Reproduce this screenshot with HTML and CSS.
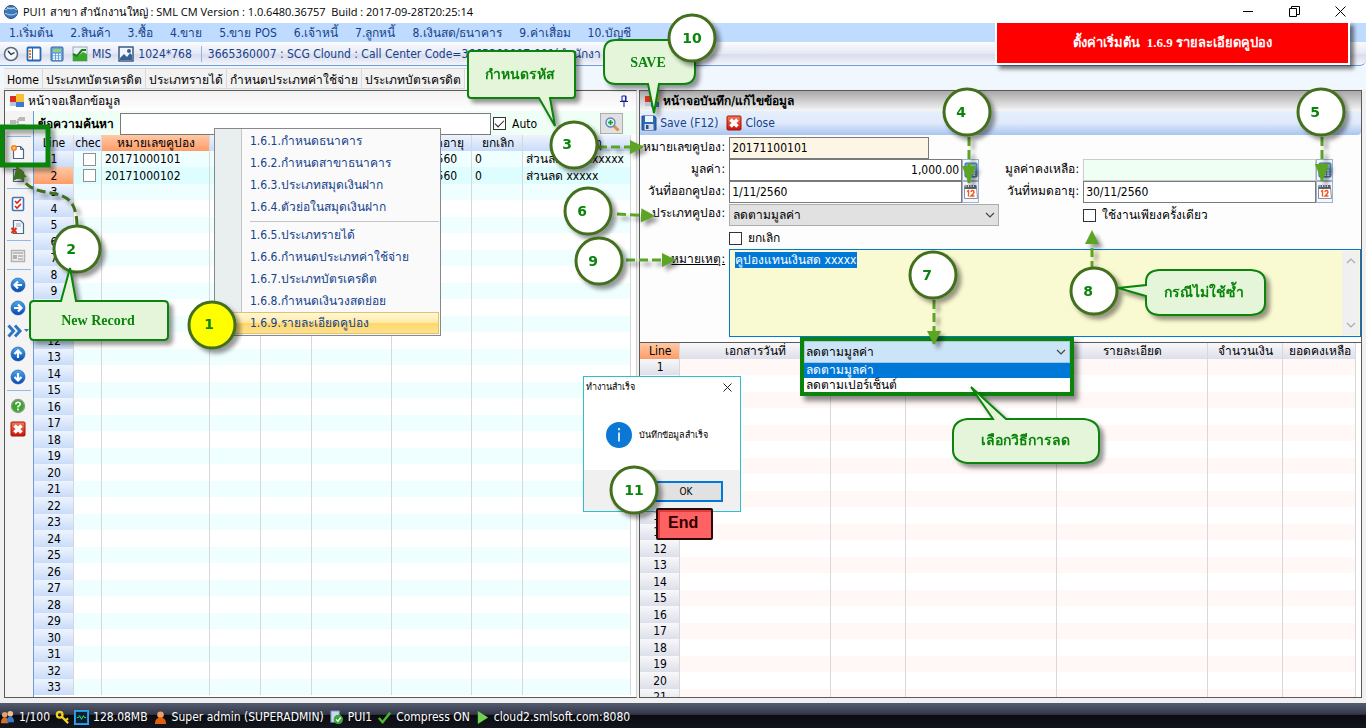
FILE: index.html
```html
<!DOCTYPE html>
<html lang="th">
<head>
    <meta charset="UTF-8">
    <meta name="viewport" content="width=device-width, initial-scale=1.0">
    <title>SML CM</title>
    <link rel="stylesheet" href="styles.css">
</head>
<body>
    <!-- shared icons -->
    <svg class="defs" width="0" height="0">
        <defs>
            <linearGradient id="blueBall" x1="0" y1="0" x2="0" y2="1">
                <stop offset="0" stop-color="#4aa8f0"/><stop offset="1" stop-color="#0648b0"/>
            </linearGradient>
            <linearGradient id="redBox" x1="0" y1="0" x2="0" y2="1">
                <stop offset="0" stop-color="#f47a5c"/><stop offset="1" stop-color="#c81408"/>
            </linearGradient>
            <symbol id="i-form" viewBox="0 0 16 16">
                <rect x="1" y="3" width="7" height="6" fill="#d8301c"/>
                <rect x="7" y="1" width="8" height="8" fill="#f8c030"/>
                <rect x="7" y="9" width="8" height="5" fill="#3e78d0"/>
                <rect x="1" y="9" width="6" height="4" fill="#b8c4d8"/>
            </symbol>
            <symbol id="i-close" viewBox="0 0 16 16">
                <rect x="1" y="1" width="14" height="14" rx="1" fill="url(#redBox)" stroke="#a81408"/>
                <path d="M4.5 4.5l7 7M11.5 4.5l-7 7" stroke="#fff" stroke-width="3.600"/>
            </symbol>
            <symbol id="i-calc" viewBox="0 0 16 16">
                <rect x="2" y="1" width="12" height="14" rx="1" fill="#6aa2dc" stroke="#3468a8"/>
                <rect x="4" y="3" width="8" height="3" fill="#8fd070"/>
                <path d="M4 8.5h8M4 11h8M4 13.3h8" stroke="#fff" stroke-width="1.4" stroke-dasharray="2 1"/>
            </symbol>
            <symbol id="i-cal" viewBox="0 0 16 16">
                <path d="M1.500 3h12l1 11.500h-13z" fill="#fff" stroke="#8a90a0"/>
                <path d="M1.500 1h12v4h-12z" fill="#5c6474"/>
                <path d="M3 0v3M5.500 0v3M8 0v3M10.500 0v3" stroke="#d8dce4"/>
                <path d="M4 7.500l1.500-1v6M8 8q0-1.500 1.500-1.500t1.500 1.500q0 1.300-3 4h3.500" fill="none" stroke="#f05a20" stroke-width="1.400"/>
            </symbol>
            <symbol id="i-save" viewBox="0 0 16 16">
                <path d="M1 1h12.500L15 3v12H1z" fill="#2c68b4" stroke="#1c4c90"/>
                <rect x="4" y="1" width="8" height="6" fill="#eef4fc"/>
                <rect x="3.500" y="9" width="9" height="6" fill="#d4dce8"/>
                <rect x="5" y="10" width="2.500" height="4" fill="#24508c"/>
            </symbol>
            <symbol id="i-ball" viewBox="0 0 16 16">
                <circle cx="8" cy="8" r="7" fill="url(#blueBall)" stroke="#1450a0" stroke-width=".6"/>
            </symbol>
            <symbol id="i-arrow" viewBox="0 0 16 16">
                <path d="M12 8H5M8 4.500L4.500 8L8 11.500" fill="none" stroke="#fff" stroke-width="2.200"/>
            </symbol>
            <symbol id="i-check" viewBox="0 0 16 16">
                <path d="M2 8.500l4 4.500l8-10" fill="none" stroke="#4cb830" stroke-width="2.600"/>
            </symbol>
            <symbol id="i-down" viewBox="0 0 10 6">
                <path d="M1 1l4 4l4-4" fill="none" stroke="currentColor" stroke-width="1.200"/>
            </symbol>
        </defs>
    </svg>

    <header class="titlebar">
        <svg class="icon" viewBox="0 0 16 16"><circle cx="8" cy="8" r="6.500" fill="#3c78b8" stroke="#284c7c"/><path d="M2 6q6-4 12 0M2 9q6 4 12 0M4 3.500q4 3 8 0" fill="none" stroke="#b4d4f0"/></svg>
        <span class="caption">PUI1 สาขา สำนักงานใหญ่ : SML CM Version : 1.0.6480.36757&nbsp; Build : 2017-09-28T20:25:14</span>
        <div class="window-buttons">
            <button aria-label="Minimize"><svg width="11" height="11" viewBox="0 0 11 11"><path d="M0 5.500h10" stroke="#000"/></svg></button>
            <button aria-label="Restore"><svg width="11" height="11" viewBox="0 0 11 11"><path d="M.5 2.500h7v8h-7zM2.500 2.500v-2h8v8h-3" fill="none" stroke="#000"/></svg></button>
            <button aria-label="Close"><svg width="11" height="11" viewBox="0 0 11 11"><path d="M.5.5l10 10M10.500.5l-10 10" stroke="#000"/></svg></button>
        </div>
    </header>

    <nav class="menubar">
        <a href="#">1.เริ่มต้น</a>
        <a href="#">2.สินค้า</a>
        <a href="#">3.ซื้อ</a>
        <a href="#">4.ขาย</a>
        <a href="#">5.ขาย POS</a>
        <a href="#">6.เจ้าหนี้</a>
        <a href="#">7.ลูกหนี้</a>
        <a href="#">8.เงินสด/ธนาคาร</a>
        <a href="#">9.ค่าเสื่อม</a>
        <a href="#">10.บัญชี</a>
    </nav>

    <div class="toolbar">
        <button aria-label="Clock"><svg class="icon" viewBox="0 0 16 16"><circle cx="8" cy="8" r="6.500" fill="#f4f8fc" stroke="#5c6c80" stroke-width="1.600"/><path d="M5 5l3 3.500l3.500-2" fill="none" stroke="#222" stroke-width="1.200"/></svg></button>
        <button aria-label="Layout"><svg class="icon" viewBox="0 0 16 16"><rect x="1.500" y="1.500" width="13" height="13" rx="1" fill="#fff" stroke="#2468b8" stroke-width="1.800"/><path d="M6.500 2v12" stroke="#2468b8"/><path d="M3 5h2M3 8h2M3 11h2" stroke="#f08020" stroke-width="2"/></svg></button>
        <button aria-label="Calculator"><svg class="icon"><use href="#i-calc"/></svg></button>
        <button><svg class="icon" viewBox="0 0 16 16"><rect x="1" y="1" width="14" height="14" fill="#e8f0f8" stroke="#9aa8c0"/><path d="M1 15V8l4 3l6-5l4 2v7z" fill="#38a828"/><path d="M1 8l4 2l5-6h4" fill="none" stroke="#1c7c1c" stroke-width="2"/></svg>MIS</button>
        <button><svg class="icon" viewBox="0 0 16 16"><rect x="1" y="1" width="14" height="14" fill="#f0f6fc" stroke="#305080" stroke-width="1.400"/><path d="M2 12l4-4l3 3l3-4l2 2v5H2z" fill="#3c6090"/><circle cx="11" cy="5" r="2" fill="#3c6090"/></svg>1024*768</button>
        <span class="company">3665360007 : SCG Clound : Call Center Code=3665360007-001(สำนักงา</span>
    </div>

    <nav class="tabs">
        <a href="#">Home</a>
        <a href="#">ประเภทบัตรเครดิต</a>
        <a href="#">ประเภทรายได้</a>
        <a href="#">กำหนดประเภทค่าใช้จ่าย</a>
        <a href="#">ประเภทบัตรเครดิต</a>
        <a href="#" class="active">รายละเอียดคูปอง</a>
    </nav>

    <main>
        <section class="pane list-pane">
            <h2 class="pane-title"><svg class="icon"><use href="#i-form"/></svg>หน้าจอเลือกข้อมูล
                <svg class="pin" viewBox="0 0 8 12"><path d="M2 1h4v5H2zM0 6.500h8M4 7v5M5.500 1v5" fill="none" stroke="#101c98"/></svg></h2>
            <div class="list-body">
                <div class="tools">
                    <button aria-label="Tree"><svg class="icon" viewBox="0 0 16 16"><path d="M0 5h6v4H0zM9 2h6v4H9zM9 9h6v4H9z" fill="#b8b8b8"/><path d="M6 7h2V4h1M8 7v4h1" fill="none" stroke="#999"/></svg></button>
                    <hr>
                    <button aria-label="New"><svg class="icon" viewBox="0 0 16 16"><path d="M3.500 2.500h7l3 3v9h-10z" fill="#fff" stroke="#486890" stroke-width="1.200"/><path d="M10.500 2.500v3h3" fill="none" stroke="#486890"/><circle cx="4" cy="4" r="3" fill="#f88020"/><circle cx="4" cy="4" r="1.500" fill="#ffd060"/></svg></button>
                    <button aria-label="Edit"><svg class="icon" viewBox="0 0 16 16"><path d="M3.500 2.500h7l3 3v9h-10z" fill="#dce8f4" stroke="#486890" stroke-width="1.200"/></svg></button>
                    <hr>
                    <button aria-label="Select"><svg class="icon" viewBox="0 0 16 16"><rect x="2.500" y="1.500" width="11" height="13" rx="1" fill="#fff" stroke="#3c78c0" stroke-width="1.600"/><path d="M5 5l2 2l4-4M5 10l2 2l4-4" fill="none" stroke="#d82010" stroke-width="1.600"/></svg></button>
                    <button aria-label="Delete"><svg class="icon" viewBox="0 0 16 16"><path d="M3.500 1.500h7l3 3v10h-10z" fill="#f4f8fc" stroke="#486890" stroke-width="1.200"/><path d="M6 5h5M6 7h5" stroke="#98a8c0"/><path d="M1.500 9l5 5M6.500 9l-5 5" stroke="#e03010" stroke-width="2.200"/></svg></button>
                    <hr>
                    <button aria-label="Preview"><svg class="icon" viewBox="0 0 16 16"><rect x="1.500" y="2.500" width="13" height="11" fill="#eee" stroke="#b0b0b0" stroke-width="1.400"/><path d="M3 5h10M8 8h5M8 11h5" stroke="#b0b0b0" stroke-width="1.400"/><path d="M3 7h4v4H3z" fill="#b0b0b0"/></svg></button>
                    <hr>
                    <button aria-label="First"><svg class="icon"><use href="#i-ball"/><use href="#i-arrow"/></svg></button>
                    <button aria-label="Next"><svg class="icon" viewBox="0 0 16 16"><use href="#i-ball"/><use href="#i-arrow" transform="rotate(180 8 8)"/></svg></button>
                    <button aria-label="Skip" class="split"><svg class="icon" viewBox="0 0 16 16"><path d="M1.500 2.500l5 5.500l-5 5.500M8 2.500l5 5.500l-5 5.500" fill="none" stroke="#2c74c0" stroke-width="3"/></svg><svg class="caret" viewBox="0 0 5 3"><path d="M0 0h5L2.500 3z" fill="#5070a8"/></svg></button>
                    <button aria-label="Up"><svg class="icon" viewBox="0 0 16 16"><use href="#i-ball"/><use href="#i-arrow" transform="rotate(90 8 8)"/></svg></button>
                    <button aria-label="Down"><svg class="icon" viewBox="0 0 16 16"><use href="#i-ball"/><use href="#i-arrow" transform="rotate(270 8 8)"/></svg></button>
                    <hr>
                    <button aria-label="Help"><svg class="icon" viewBox="0 0 16 16"><circle cx="8" cy="8" r="6.500" fill="#38a828" stroke="#8a9a8a" stroke-width="1.400"/><path d="M5.800 6.500q0-2.300 2.200-2.300t2.200 2q0 1-2.200 2.200v1M8 10.500v2" fill="none" stroke="#fff" stroke-width="1.600"/></svg></button>
                    <button aria-label="Exit"><svg class="icon"><use href="#i-close"/></svg></button>
                </div>
                <div class="list-main">
                    <div class="search">
                        <label for="search" class="search-label">ข้อความค้นหา</label>
                        <input type="text" id="search">
                        <label class="check"><input type="checkbox" checked>Auto</label>
                        <button class="find" aria-label="Search"><svg class="icon" viewBox="0 0 16 16"><path d="M9.500 9.500l5 5" stroke="#e09040" stroke-width="3"/><circle cx="6.500" cy="6.500" r="4.500" fill="#d8f0ff" stroke="#5c88b8" stroke-width="1.400"/><path d="M4 6.500h5M6.500 4v5" stroke="#189818" stroke-width="1.600"/></svg></button>
                    </div>
                    <div class="grid-wrap">
                        <table class="grid blue">
                            <colgroup><col class="w40"><col class="w28"><col class="w108"><col class="w51"><col class="w51"><col class="w80"><col class="w80"><col class="w51"><col></colgroup>
                            <thead><tr><th>Line</th><th class="clip">chec</th><th class="hot">หมายเลขคูปอง</th><th></th><th></th><th></th><th class="right">วันหมดอายุ</th><th>ยกเลิก</th><th>หมายเหตุ</th></tr></thead>
                            <tbody id="coupons">
                                <tr><td>1</td><td><input type="checkbox" aria-label="20171000101"></td><td>20171000101</td><td></td><td></td><td></td><td>30/11/2560</td><td>0</td><td>ส่วนลด xxxxxxxxx</td></tr>
                                <tr class="selected"><td>2</td><td><input type="checkbox" aria-label="20171000102"></td><td>20171000102</td><td></td><td></td><td></td><td>30/11/2560</td><td>0</td><td>ส่วนลด xxxxx</td></tr>
                            </tbody>
                        </table>
                    </div>
                </div>
            </div>
        </section>

        <section class="pane edit-pane">
            <h2 class="pane-title dark"><svg class="icon"><use href="#i-form"/></svg>หน้าจอบันทึก/แก้ไขข้อมูล</h2>
            <div class="edit-tools">
                <button><svg class="icon"><use href="#i-save"/></svg>Save (F12)</button>
                <button><svg class="icon"><use href="#i-close"/></svg>Close</button>
            </div>
            <form class="form">
                <label for="code">หมายเลขคูปอง:</label>
                <div class="field"><input type="text" id="code" class="code" value="20171100101"></div>
                <span></span><span></span>

                <label for="amount">มูลค่า:</label>
                <div class="field"><input type="text" id="amount" class="number" value="1,000.00"><button type="button" aria-label="Calculator"><svg class="icon"><use href="#i-calc"/></svg></button></div>
                <label for="balance">มูลค่าคงเหลือ:</label>
                <div class="field"><input type="text" id="balance" class="locked" readonly><button type="button" aria-label="Calculator"><svg class="icon"><use href="#i-calc"/></svg></button></div>

                <label for="issued">วันที่ออกคูปอง:</label>
                <div class="field"><input type="text" id="issued" value="1/11/2560"><button type="button" aria-label="Calendar"><svg class="icon"><use href="#i-cal"/></svg></button></div>
                <label for="expires">วันที่หมดอายุ:</label>
                <div class="field"><input type="text" id="expires" value="30/11/2560"><button type="button" aria-label="Calendar"><svg class="icon"><use href="#i-cal"/></svg></button></div>

                <label for="type">ประเภทคูปอง:</label>
                <div class="combo"><select id="type"><option>ลดตามมูลค่า</option><option>ลดตามเปอร์เซ็นต์</option></select><svg class="chevron"><use href="#i-down"/></svg></div>
                <span></span>
                <label class="check"><input type="checkbox">ใช้งานเพียงครั้งเดียว</label>

                <span></span>
                <label class="check"><input type="checkbox">ยกเลิก</label>
                <span></span><span></span>

                <label for="remark" class="link">หมายเหตุ:</label>
                <div class="remark">
                    <textarea id="remark">คูปองแทนเงินสด xxxxx</textarea>
                    <div class="scroll"><svg class="chevron up"><use href="#i-down"/></svg><svg class="chevron"><use href="#i-down"/></svg></div>
                </div>
            </form>
            <div class="grid-wrap detail">
                <table class="grid gray">
                    <colgroup><col class="w40"><col class="w151"><col class="w75"><col class="w151"><col class="w151"><col class="w75"><col></colgroup>
                    <thead><tr><th class="hot">Line</th><th>เอกสารวันที่</th><th></th><th></th><th>รายละเอียด</th><th>จำนวนเงิน</th><th>ยอดคงเหลือ</th></tr></thead>
                    <tbody id="details"></tbody>
                </table>
            </div>
        </section>
    </main>

    <footer class="statusbar">
        <svg class="icon" viewBox="0 0 16 16"><circle cx="5" cy="5" r="3" fill="#e0a070"/><path d="M1 14q0-6 4-6t4 6z" fill="#d87020"/><circle cx="11" cy="4" r="3" fill="#f0c090"/><path d="M7 13q0-6 4-6t4 6z" fill="#3c78c8"/></svg><span>1/100</span>
        <svg class="icon" viewBox="0 0 16 16"><circle cx="5" cy="5" r="3" fill="none" stroke="#f0d020" stroke-width="2.400"/><path d="M7 7l7 7M11 11l3-2" stroke="#f0d020" stroke-width="2.400"/></svg>
        <svg class="icon" viewBox="0 0 16 16"><rect x="1" y="1" width="14" height="14" fill="#082030" stroke="#30a0f0" stroke-width="2"/><path d="M3 8h2l1-2l2 4l2-4l1 2h2" fill="none" stroke="#30e080"/></svg><span>128.08MB</span>
        <svg class="icon" viewBox="0 0 16 16"><circle cx="8" cy="5" r="3.500" fill="#f0a060"/><path d="M2 15q0-7 6-7t6 7z" fill="#e06010"/></svg><span>Super admin (SUPERADMIN)</span>
        <svg class="icon" viewBox="0 0 16 16"><rect x="2" y="1" width="9" height="12" fill="#c8d8f0" stroke="#7088b0"/><circle cx="10" cy="10" r="5" fill="#38a838"/><path d="M7.500 10l2 2l3-4" fill="none" stroke="#fff" stroke-width="1.400"/></svg><span>PUI1</span>
        <svg class="icon"><use href="#i-check"/></svg><span>Compress ON</span>
        <svg class="icon" viewBox="0 0 16 16"><path d="M3 1l11 7L3 15z" fill="#70d050"/></svg><span>cloud2.smlsoft.com:8080</span>
    </footer>

    <!-- open drop-down menu -->
    <ul class="menu">
        <li><a href="#">1.6.1.กำหนดธนาคาร</a></li>
        <li><a href="#">1.6.2.กำหนดสาขาธนาคาร</a></li>
        <li><a href="#">1.6.3.ประเภทสมุดเงินฝาก</a></li>
        <li><a href="#">1.6.4.ตัวย่อในสมุดเงินฝาก</a></li>
        <li class="separator"></li>
        <li><a href="#">1.6.5.ประเภทรายได้</a></li>
        <li><a href="#">1.6.6.กำหนดประเภทค่าใช้จ่าย</a></li>
        <li><a href="#">1.6.7.ประเภทบัตรเครดิต</a></li>
        <li><a href="#">1.6.8.กำหนดเงินวงสดย่อย</a></li>
        <li class="hover"><a href="#">1.6.9.รายละเอียดคูปอง</a></li>
    </ul>

    <!-- discount type list, opened -->
    <div class="type-list">
        <div class="combo open"><select aria-label="ประเภทคูปอง"><option>ลดตามมูลค่า</option><option>ลดตามเปอร์เซ็นต์</option></select><svg class="chevron"><use href="#i-down"/></svg></div>
        <ul>
            <li class="picked">ลดตามมูลค่า</li>
            <li>ลดตามเปอร์เซ็นต์</li>
        </ul>
    </div>

    <div class="dialog" role="dialog" aria-label="ทำงานสำเร็จ">
        <div class="dialog-title"><span>ทำงานสำเร็จ</span><button aria-label="Close"><svg width="9" height="9" viewBox="0 0 9 9"><path d="M.5.5l8 8M8.500.5l-8 8" stroke="#222"/></svg></button></div>
        <div class="dialog-body">
            <svg width="26" height="26" viewBox="0 0 26 26"><circle cx="13" cy="13" r="13" fill="#0a78d4"/><path d="M13 10.500v9M13 6v2.200" stroke="#fff" stroke-width="1.600"/></svg>
            <span>บันทึกข้อมูลสำเร็จ</span>
        </div>
        <div class="dialog-foot"><button>OK</button></div>
    </div>

    <div class="banner">ตั้งค่าเริ่มต้น&nbsp; 1.6.9 รายละเอียดคูปอง</div>
    <div class="end">End</div>

    <!-- numbered steps and callouts -->
    <svg class="steps" width="1366" height="728" viewBox="0 0 1366 728">
        <defs>
            <marker id="head" viewBox="0 0 14 14" refX="13" refY="7" markerWidth="14" markerHeight="14" markerUnits="userSpaceOnUse" orient="auto"><path d="M0 0L14 7L0 14z" fill="#5ca424"/></marker>
            <marker id="headDown" viewBox="0 0 18 14" refX="17" refY="7" markerWidth="18" markerHeight="14" markerUnits="userSpaceOnUse" orient="auto"><path d="M0 0L18 7L0 14z" fill="#5ca424"/></marker>
            <marker id="headDark" viewBox="0 0 14 14" refX="13" refY="7" markerWidth="14" markerHeight="14" markerUnits="userSpaceOnUse" orient="auto"><path d="M0 0L14 7L0 14z" fill="#3f6f1a"/></marker>
        </defs>
        <rect class="frame" x="2" y="127" width="46" height="38"/>
        <g class="arrow">
            <path d="M598 147H643"/>
            <path d="M617 214L654 216"/>
            <path d="M626 260H675"/>
            <path class="long" d="M969 137V183"/>
            <path class="long" d="M1322 137V181"/>
            <path d="M934 300V344"/>
            <path d="M1092 270V231"/>
            <path class="curve" d="M77 225C76 172 28 212 17 166"/>
        </g>
        <g class="callout">
            <path d="M471 51h101q3 0 3 3v41q0 3-3 3h-22l5 28l-16-28h-68q-3 0-3-3V54q0-3 3-3z"/>
            <path d="M616 40h67q12 0 12 12v20q0 12-12 12h-24l-5 29l-6-29h-32q-12 0-12-12V52q0-12 12-12z"/>
            <text class="thai" x="520" y="79">กำหนดรหัส</text>
            <text x="648" y="67">SAVE</text>
        </g>
        <g class="step" transform="translate(212 325)"><circle class="yellow" r="23"/><text x="-3" y="4">1</text></g>
        <g class="step" transform="translate(77 249)"><circle r="23"/><text x="-6" y="5">2</text></g>
        <g class="step" transform="translate(574 145)"><circle r="23"/><text x="-7" y="4">3</text></g>
        <g class="step" transform="translate(967 112)"><circle r="23"/><text x="-6" y="5">4</text></g>
        <g class="step" transform="translate(1321 112)"><circle r="23"/><text x="-6" y="5">5</text></g>
        <g class="step" transform="translate(588 211)"><circle r="23"/><text x="-6" y="5">6</text></g>
        <g class="step" transform="translate(933 275)"><circle r="23"/><text x="-6" y="5">7</text></g>
        <g class="step" transform="translate(1094 291)"><circle r="23"/><text x="-6" y="5">8</text></g>
        <g class="step" transform="translate(599 261)"><circle r="23"/><text x="-6" y="5">9</text></g>
        <g class="step" transform="translate(692 38)"><circle r="23"/><text y="5">10</text></g>
        <g class="step" transform="translate(634 490)"><circle r="23"/><text y="5">11</text></g>
        <g class="callout">
            <path d="M34 301h27l9-33l6 33h88q4 0 4 4v31q0 4-4 4H34q-4 0-4-4v-31q0-4 4-4z"/>
            <path d="M967 419h26l-22-32l35 32h78q15 2 15 14v17q0 12-15 13H967q-14-2-14-13v-17q0-12 14-14z"/>
            <path d="M1159 270h92q14 1 14 12v21q0 11-14 12h-92q-13-1-13-12v-7l-28-8l28-3v-3q0-11 13-12z"/>
            <text x="98" y="325">New Record</text>
            <text class="thai" x="1025" y="445">เลือกวิธีการลด</text>
            <text class="thai" x="1204" y="297">กรณีไม่ใช้ซ้ำ</text>
        </g>
    </svg>

    <script>
        // add the empty numbered rows of a grid
        function fillRows(id, from, to, columns) {
            const body = document.getElementById(id);
            for (let line = from; line <= to; line++) {
                const row = body.insertRow();
                row.insertCell().textContent = line;
                for (let i = 1; i < columns; i++) row.insertCell();
            }
        }

        fillRows('coupons', 3, 33, 9);
        fillRows('details', 1, 21, 7);
        document.getElementById('remark').select();
    </script>
</body>
</html>
```
FILE: styles.css
```css
* {
    box-sizing: border-box;
}

body {
    margin: 0;
    height: 100vh;
    overflow: hidden;
    display: flex;
    flex-direction: column;
    position: relative;
    background: #fff;
    color: #000;
    font-family: "DejaVu Sans Condensed", sans-serif;
    font-size: 12px;
    line-height: 16px;
}

button, input, select, textarea {
    font: inherit;
    color: inherit;
    margin: 0;
}

button {
    border: none;
    background: none;
    padding: 0;
    display: flex;
    align-items: center;
    justify-content: center;
}

a {
    color: inherit;
    text-decoration: none;
}

ul {
    list-style: none;
    margin: 0;
    padding: 0;
}

.defs {
    position: absolute;
}

.icon {
    width: 16px;
    height: 16px;
    flex: none;
}

/* title bar */
.titlebar {
    display: flex;
    align-items: center;
    gap: 4px;
    height: 23px;
    flex: none;
    padding: 0 20px 0 3px;
    font-family: "Open Sans", sans-serif;
    font-size: 11px;
}

.caption {
    flex: 1;
}

.window-buttons {
    display: flex;
    gap: 35px;
}

/* menu and toolbar */
.menubar {
    display: flex;
    align-items: center;
    gap: 17px;
    height: 19px;
    flex: none;
    padding: 0 9px;
    background: #bfdbff;
    color: #15428b;
}

.toolbar {
    display: flex;
    align-items: center;
    gap: 7px;
    height: 24px;
    flex: none;
    padding: 0 3px;
    background: linear-gradient(#fbfcfe, #e6e9f4 50%, #d8dcec 55%, #f2f5fc);
    border-bottom: 1px solid #6f9ddb;
    border-radius: 0 0 6px 0;
    color: #15428b;
}

.toolbar button {
    gap: 4px;
}

.company {
    border-left: 1px solid #8db4e8;
    padding-left: 6px;
    margin-left: 2px;
}

.tabs {
    display: flex;
    height: 23px;
    flex: none;
    padding: 2px 4px 0;
    background: #f0f7ff;
}

.tabs a {
    padding: 3px 3px 0;
    background: #f2f2f2;
    border: 1px solid #d9d9d9;
    border-left-width: 0;
}

.tabs .active {
    background: #fff;
    border-bottom: none;
    padding-left: 6px;
}

/* panes */
main {
    flex: 1;
    min-height: 0;
    display: flex;
    gap: 2px;
    padding: 1px 4px 5px;
    background: #f0f0f0;
}

.pane {
    display: flex;
    flex-direction: column;
    min-height: 0;
    border: 1px solid #5a5a5a;
    background: #fff;
}

.list-pane {
    flex: 633;
    min-width: 0;
    border-right-color: #d0d0d0;
}

.edit-pane {
    flex: 723;
    min-width: 0;
    background: #fdfdfd;
}

.pane-title {
    display: flex;
    align-items: center;
    gap: 3px;
    height: 20px;
    flex: none;
    margin: 0;
    padding: 1px 4px;
    font-size: 12px;
    font-weight: normal;
    background: linear-gradient(#f2f2f2, #fff);
}

.pane-title.dark {
    font-weight: bold;
    background: linear-gradient(#a8a8a8, #f6f6f6);
}

.pin {
    width: 8px;
    height: 12px;
    margin-left: auto;
    margin-right: 4px;
}

.list-body {
    flex: 1;
    min-height: 0;
    display: flex;
}

.tools {
    display: flex;
    flex-direction: column;
    width: 29px;
    border-right: 1px solid #6f9ddb;
    background: #f4f4f4;
}

.tools button {
    height: 23px;
    flex: none;
    padding-right: 2px;
}

.tools .split {
    justify-content: flex-start;
    padding-left: 2px;
    gap: 1px;
}

.caret {
    width: 5px;
    height: 3px;
}

.tools hr {
    width: 24px;
    flex: none;
    margin: 2px auto 3px 2px;
    border: none;
    border-top: 1px solid #8fb8ee;
}

.list-main {
    flex: 1;
    min-width: 0;
    display: flex;
    flex-direction: column;
}

.search {
    display: flex;
    align-items: center;
    height: 24px;
    flex: none;
    padding: 1px 13px 0 4px;
    background: #f0fff6;
}

.search-label {
    width: 82px;
    font-weight: bold;
}

.search input[type="text"] {
    width: 371px;
    height: 22px;
    border: 1px solid #7a7a7a;
}

.check {
    display: flex;
    align-items: center;
    gap: 6px;
}

.search .check {
    margin-left: 2px;
}

input[type="checkbox"] {
    appearance: none;
    width: 13px;
    height: 13px;
    flex: none;
    border: 1px solid #333;
    background: #fff;
    display: grid;
    place-items: center;
}

input[type="checkbox"]:checked::before {
    content: "";
    width: 8px;
    height: 4px;
    border: solid #222;
    border-width: 0 0 1px 1px;
    transform: translateY(-1px) rotate(-45deg);
}

.find {
    width: 23px;
    height: 21px;
    margin-left: auto;
    border: 1px solid #adadad;
    background: #e1e1e1;
}

/* data grids */
.grid-wrap {
    flex: 1;
    min-height: 0;
    overflow: hidden;
    padding-right: 5px;
}

.grid {
    width: 100%;
    table-layout: fixed;
    border-collapse: collapse;
}

.w28 { width: 28px; }
.w40 { width: 40px; }
.w51 { width: 51px; }
.w75 { width: 75px; }
.w80 { width: 80px; }
.w108 { width: 108px; }
.w151 { width: 151px; }

.grid th, .grid td {
    padding: 0 3px;
    height: 16px;
    line-height: 16px;
    overflow: hidden;
    white-space: nowrap;
    font-weight: normal;
    box-shadow: inset -1px 0 #d8d8d8;
}

.grid tbody tr:nth-child(even) td {
    height: 17px;
}

.grid th.clip {
    padding: 0 1px;
}

.grid th.right {
    text-align: right;
    padding-right: 8px;
}

.grid td:first-child {
    text-align: center;
}

.grid td input {
    width: 13px;
    height: 13px;
    margin-left: 6px;
    border-color: #8e8f8f;
}

.blue tr:nth-child(odd) td {
    background: #effeff;
}

.blue th, .blue tr td:first-child {
    background: linear-gradient(#eef4fe, #c9dcf9);
}

.blue .selected td {
    background: #defdfe;
}

.gray tr:nth-child(odd) td {
    background: #fff8f7;
}

.gray th, .gray tr td:first-child {
    background: linear-gradient(#f8f8fb, #dddfe9);
}

.grid .hot, .grid .selected td:first-child {
    background: linear-gradient(#ffc9a4, #ff9c68);
}

.detail {
    border-top: 1px solid #5a5a5a;
    background: #fff;
}

/* edit form */
.edit-tools {
    display: flex;
    align-items: center;
    gap: 8px;
    height: 24px;
    flex: none;
    padding: 0 1px;
    color: #15428b;
    background: linear-gradient(#e6effc, #dfeafb 50%, #a9c5f0);
    border-radius: 0 0 4px 0;
}

.edit-tools button {
    gap: 3px;
}

.form {
    display: grid;
    grid-template-columns: 85px 270px 76px 1fr;
    grid-template-rows: 22px 22px 22px 24px 22px 88px;
    column-gap: 4px;
    padding: 2px 0 5px;
}

.form > label {
    justify-self: end;
    white-space: nowrap;
    padding-top: 2px;
}

.form > .check {
    justify-self: start;
    padding: 0;
}

.form > .link {
    text-decoration: underline;
}

.field {
    display: flex;
}

.field input {
    width: 233px;
    padding: 0 2px;
    border: 1px solid #7a7a7a;
    background: #fff;
}

.field .code {
    width: 200px;
    background: #fdf5e6;
}

.field .number {
    text-align: right;
}

.field .locked {
    background: #f0fff4;
    border-color: #ccc;
}

.field button {
    width: 17px;
    border: 1px solid #9fb4cc;
    background: #f4f8fc;
}

.combo {
    display: grid;
    align-items: center;
    height: 22px;
    align-self: center;
}

.combo select, .combo .chevron {
    grid-area: 1 / 1;
}

.combo select {
    appearance: none;
    height: 22px;
    padding: 0 3px;
    border: 1px solid #adadad;
    border-radius: 0;
    background: #e1e1e1;
}

.chevron {
    width: 10px;
    height: 6px;
    color: #444;
}

.combo .chevron {
    justify-self: end;
    margin-right: 4px;
}

.remark {
    grid-column: 2 / 5;
    display: flex;
    border: 1px solid #0078d7;
    background: #fafad2;
}

.remark textarea {
    flex: 1;
    resize: none;
    border: none;
    outline: none;
    background: none;
    padding: 2px 5px;
}

.remark textarea::selection {
    background: #0078d7;
    color: #fff;
}

.scroll {
    display: flex;
    flex-direction: column;
    justify-content: space-between;
    align-items: center;
    width: 17px;
    margin: 1px;
    padding: 7px 0;
    background: #f0f0f0;
}

.scroll .chevron {
    color: #aaa;
}

.up {
    transform: rotate(180deg);
}

/* status bar */
.statusbar {
    display: flex;
    align-items: center;
    gap: 4px;
    height: 25px;
    flex: none;
    padding: 3px 0 0;
    color: #fff;
    background: linear-gradient(#545c70, #333848 45%, #0a0c10 50%, #14161e);
}

.statusbar .icon {
    width: 15px;
    height: 15px;
}

.statusbar span {
    margin-right: 1px;
}

/* floating menu */
.menu {
    position: absolute;
    left: 214px;
    top: 128px;
    width: 227px;
    padding: 1px;
    border: 1px solid #86888c;
    background: linear-gradient(90deg, #e9eeee 26px, #c5c5c5 26px, #c5c5c5 27px, #fafafa 27px);
    color: #15428b;
}

.menu li {
    height: 22px;
    padding: 3px 0 3px 34px;
}

.menu .separator {
    height: 4px;
    padding: 0;
    margin: 0 0 2px 34px;
    border-bottom: 1px solid #c5c5c5;
}

.menu .hover {
    border: 1px solid #e5c365;
    padding: 2px 0 2px 33px;
    background: linear-gradient(#fff8d9, #ffe9a2 49%, #ffd767 50%, #ffe291);
}

/* opened combo over the detail grid */
.type-list {
    position: absolute;
    left: 800px;
    top: 337px;
    width: 274px;
    border: 4px solid #0a840a;
    background: #fff;
    box-shadow: 4px 5px 5px rgba(0, 0, 0, .45);
}

.type-list .combo select {
    padding: 0 1px;
    background: #cce4f7;
    border-color: #a8c8e0;
}

.type-list li {
    padding: 0 2px;
    height: 14px;
    line-height: 14px;
}

.type-list .picked {
    height: 15px;
    background: #0078d7;
    color: #fff;
}

/* message box */
.dialog {
    position: absolute;
    left: 583px;
    top: 376px;
    width: 158px;
    border: 1px solid #2cc0cc;
    background: #fff;
    font-size: 9px;
}

.dialog-title {
    display: flex;
    justify-content: space-between;
    padding: 2px 8px 0 2px;
}

.dialog-body {
    display: flex;
    align-items: center;
    gap: 7px;
    height: 75px;
    padding: 4px 0 0 22px;
}

.dialog-foot {
    display: flex;
    justify-content: flex-end;
    padding: 11px 17px 9px;
    background: #f0f0f0;
}

.dialog-foot button {
    width: 74px;
    height: 21px;
    border: 2px solid #0078d7;
    background: #e1e1e1;
    font-size: 10px;
}

.banner {
    position: absolute;
    right: 16px;
    top: 21px;
    width: 355px;
    padding: 12px 0;
    border: 2px solid #fff;
    background: #f00;
    color: #fff;
    text-align: center;
    font-family: "Liberation Serif", serif;
    font-size: 13px;
    font-weight: bold;
    box-shadow: 4px 4px 4px rgba(0, 0, 0, .5);
}

.end {
    position: absolute;
    left: 656px;
    top: 508px;
    width: 57px;
    height: 32px;
    padding: 5px 10px;
    border: 2px solid #2a0a0a;
    border-radius: 2px;
    background: #ff6262;
    box-shadow: inset 4px 4px 0 -2px #e03c3c;
    color: #300;
    font-family: "Liberation Sans", sans-serif;
    font-size: 16px;
    font-weight: bold;
}

/* numbered steps */
.steps {
    position: absolute;
    left: 0;
    top: 0;
    pointer-events: none;
}

.steps g, .frame {
    filter: drop-shadow(4px 4px 2px rgba(0, 0, 0, .4));
}

.frame {
    fill: none;
    stroke: #0a840a;
    stroke-width: 5;
}

.arrow path {
    fill: none;
    stroke: #5ca424;
    stroke-width: 3;
    stroke-dasharray: 9 4;
    marker-end: url(#head);
}

.arrow .long {
    marker-end: url(#headDown);
}

.arrow .curve {
    stroke: #3f6f1a;
    marker-end: url(#headDark);
}

.step circle {
    fill: #fff;
    stroke: #42701c;
    stroke-width: 3;
}

.step .yellow {
    fill: #ff0;
}

.steps text {
    fill: #0a840a;
    font-weight: bold;
    text-anchor: middle;
}

.step text {
    font-family: "DejaVu Sans", sans-serif;
    font-size: 14px;
}

.callout path {
    fill: #e4f5da;
    stroke: #0a840a;
    stroke-width: 2;
}

.callout text {
    font-family: "Liberation Serif", serif;
    font-size: 14px;
}
```
